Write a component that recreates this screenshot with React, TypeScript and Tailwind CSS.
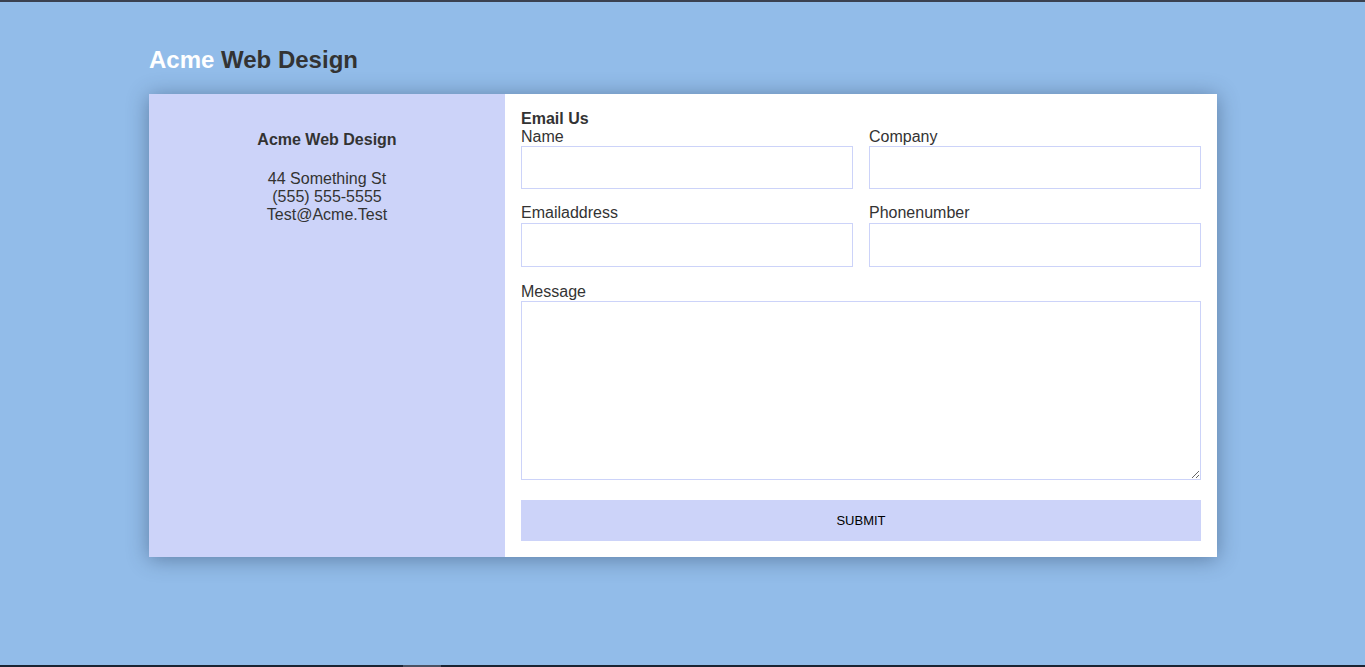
const fieldClass =
  "block w-full border border-[#ccd3f9] bg-white outline-none px-2";

interface FieldProps {
  label: string;
  size: string;
}

const Field = ({ label, size }: FieldProps) => (
  <div>
    <label className="block leading-[18px]">{label}</label>
    <input type="text" className={`${fieldClass} ${size}`} />
  </div>
);

const App = () => {
  return (
    <div className="min-h-[667px] h-[667px] flex flex-col bg-[#92bce9] font-['Liberation_Sans',Arial,sans-serif] text-[#333333] text-base">
      <div className="h-[2px] bg-[#3b4150]" />
      <div className="flex-1 px-[149px] pt-[44px]">
        <h1 className="text-2xl font-bold leading-[28px]">
          <span className="text-white">Acme</span> Web Design
        </h1>

        <div className="mt-5 w-[1068px] flex shadow-[0_2px_20px_rgba(30,50,80,0.45)]">
          <div className="w-[356px] shrink-0 bg-[#ccd3f9] text-center pt-[37px]">
            <h3 className="font-bold leading-[18px]">Acme Web Design</h3>
            <ul className="mt-[21px] leading-[18px]">
              <li>44 Something St</li>
              <li>(555) 555-5555</li>
              <li>Test@Acme.Test</li>
            </ul>
          </div>

          <div className="flex-1 bg-white p-4">
            <h3 className="font-bold leading-[18px]">Email Us</h3>
            <form className="grid grid-cols-2 gap-x-4 gap-y-[15px]">
              <Field label="Name" size="h-[43px]" />
              <Field label="Company" size="h-[43px]" />
              <Field label="Emailaddress" size="h-[44px] mt-px" />
              <Field label="Phonenumber" size="h-[44px] mt-px" />
              <div className="col-span-2 pt-px">
                <label className="block leading-[18px]">Message</label>
                <textarea className="block w-full h-[179px] border border-[#ccd3f9] outline-none p-2" />
              </div>
              <div className="col-span-2 pt-[5px]">
                <button
                  type="button"
                  className="w-full h-[41px] bg-[#ccd3f9] text-black text-[13px] uppercase font-['Liberation_Sans',Arial,sans-serif]"
                >
                  Submit
                </button>
              </div>
            </form>
          </div>
        </div>
      </div>
      <div className="h-[2px] bg-[#1b2433] flex">
        <div className="ml-[403px] w-[38px] bg-[#4a5263]" />
      </div>
    </div>
  );
};

export default App;
